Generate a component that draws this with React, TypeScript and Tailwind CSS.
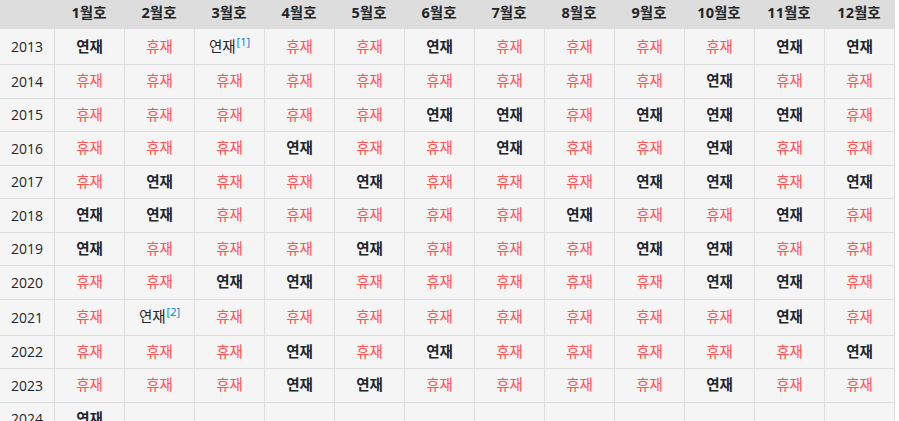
import React from "react";

const rows: { year: string; cells: string; notes?: Record<number, string>; tall?: boolean }[] = [
  { year: "2013", cells: "OXOXXOXXXXOO", notes: { 2: "[1]" }, tall: true },
  { year: "2014", cells: "XXXXXXXXXOXX" },
  { year: "2015", cells: "XXXXXOOXOOOX" },
  { year: "2016", cells: "XXXOXXOXXOXX" },
  { year: "2017", cells: "XOXXOXXXOOXO" },
  { year: "2018", cells: "OOXXXXXOXXOX" },
  { year: "2019", cells: "OXXXOXXXOOXX" },
  { year: "2020", cells: "XXOOXXXXXOOX" },
  { year: "2021", cells: "XOXXXXXXXXOX", notes: { 1: "[2]" }, tall: true },
  { year: "2022", cells: "XXXOXOXXXXXO" },
  { year: "2023", cells: "XXXOOXXXXOXX" },
  { year: "2024", cells: "O           " },
];

const months = Array.from({ length: 12 }, (_, i) => `${i + 1}월호`);

const font = { fontFamily: '"Open Sans", "Noto Sans CJK KR", sans-serif' };

export default function App() {
  return (
    <div className="bg-white w-[899px] h-[421px] overflow-hidden" style={font}>
      <div className="w-[895px] border-r border-[#dddddd] bg-[#f5f5f5] text-[14.5px] text-[#212529]">
        <div className="flex h-[28px] bg-[#dddddd] font-bold">
          <div className="w-[54px] shrink-0" />
          {months.map((m) => (
            <div key={m} className="w-[70px] shrink-0 flex items-center justify-center pb-[2px]">
              {m}
            </div>
          ))}
        </div>
        {rows.map((r) => (
          <div
            key={r.year}
            className={`flex border-t border-[#dddddd] ${r.tall ? "h-[36px]" : "h-[33.5px]"}`}
          >
            <div className="w-[54px] shrink-0 flex items-center justify-center text-[14px]">{r.year}</div>
            {r.cells.split("").map((c, i) => {
              const note = r.notes?.[i];
              return (
                <div
                  key={i}
                  className="w-[70px] shrink-0 border-l border-[#dddddd] flex items-center justify-center"
                >
                  {c === "O" ? (
                    note ? (
                      <span className="text-[#212529]">
                        연재
                        <span className="text-[11px] text-[#0275d8] relative top-[-6px] ml-[1px]">{note}</span>
                      </span>
                    ) : (
                      <span className="font-bold text-[#212529]">연재</span>
                    )
                  ) : c === "X" ? (
                    <span className="text-[#ff5252]">휴재</span>
                  ) : null}
                </div>
              );
            })}
          </div>
        ))}
      </div>
    </div>
  );
}
